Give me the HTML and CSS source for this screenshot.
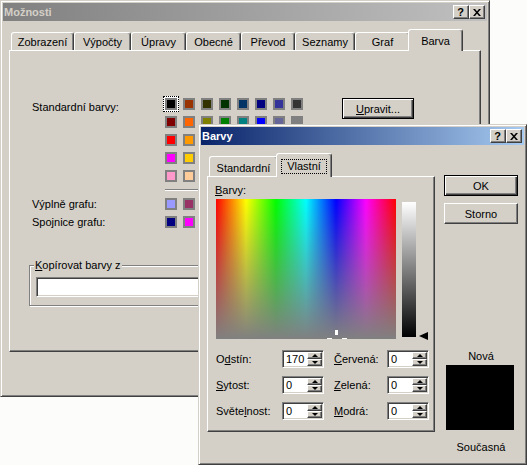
FILE: index.html
```html
<!DOCTYPE html>
<html lang="cs">
<head>
<meta charset="utf-8">
<title>Možnosti</title>
<link rel="stylesheet" href="styles.css">
</head>
<body>
<div class="desktop">
  <div class="win main-win">
    <div class="titlebar inactive">
      <span class="title-text">Možnosti</span>
      <span class="cap-btns">
        <span class="cap-btn help">?</span>
        <span class="cap-btn close"><svg width="8" height="7" viewBox="0 0 8 7"><polygon points="0,0 2,0 8,7 6,7"/><polygon points="6,0 8,0 2,7 0,7"/></svg></span>
      </span>
    </div>
    <div class="tabs main-tabs">
      <div class="tab t-zob">Zobrazení</div>
      <div class="tab t-vyp">Výpočty</div>
      <div class="tab t-upr">Úpravy</div>
      <div class="tab t-obe">Obecné</div>
      <div class="tab t-pre">Převod</div>
      <div class="tab t-sez">Seznamy</div>
      <div class="tab t-graf">Graf</div>
      <div class="tab sel t-bar">Barva</div>
    </div>
    <div class="panel main-panel">
      <div class="palette">
        <div class="pal-labels">
          <div class="lbl std-lbl">Standardní barvy:</div>
          <div class="lbl">Výplně grafu:</div>
          <div class="lbl">Spojnice grafu:</div>
        </div>
        <div class="pal-swatches">
          <div class="sw-grid">
            <span class="cell sel"><i class="sw" style="background:#000000"></i></span>
            <span class="cell"><i class="sw" style="background:#993300"></i></span>
            <span class="cell"><i class="sw" style="background:#333300"></i></span>
            <span class="cell"><i class="sw" style="background:#003300"></i></span>
            <span class="cell"><i class="sw" style="background:#003366"></i></span>
            <span class="cell"><i class="sw" style="background:#000080"></i></span>
            <span class="cell"><i class="sw" style="background:#333399"></i></span>
            <span class="cell"><i class="sw" style="background:#333333"></i></span>
            <span class="cell"><i class="sw" style="background:#800000"></i></span>
            <span class="cell"><i class="sw" style="background:#ff6600"></i></span>
            <span class="cell"><i class="sw" style="background:#808000"></i></span>
            <span class="cell"><i class="sw" style="background:#008000"></i></span>
            <span class="cell"><i class="sw" style="background:#008080"></i></span>
            <span class="cell"><i class="sw" style="background:#0000ff"></i></span>
            <span class="cell"><i class="sw" style="background:#666699"></i></span>
            <span class="cell"><i class="sw" style="background:#808080"></i></span>
            <span class="cell"><i class="sw" style="background:#ff0000"></i></span>
            <span class="cell"><i class="sw" style="background:#ff9900"></i></span>
            <span class="cell"><i class="sw" style="background:#99cc00"></i></span>
            <span class="cell"><i class="sw" style="background:#339966"></i></span>
            <span class="cell"><i class="sw" style="background:#33cccc"></i></span>
            <span class="cell"><i class="sw" style="background:#3366ff"></i></span>
            <span class="cell"><i class="sw" style="background:#800080"></i></span>
            <span class="cell"><i class="sw" style="background:#969696"></i></span>
            <span class="cell"><i class="sw" style="background:#ff00ff"></i></span>
            <span class="cell"><i class="sw" style="background:#ffcc00"></i></span>
            <span class="cell"><i class="sw" style="background:#ffff00"></i></span>
            <span class="cell"><i class="sw" style="background:#00ff00"></i></span>
            <span class="cell"><i class="sw" style="background:#00ffff"></i></span>
            <span class="cell"><i class="sw" style="background:#00ccff"></i></span>
            <span class="cell"><i class="sw" style="background:#993366"></i></span>
            <span class="cell"><i class="sw" style="background:#c0c0c0"></i></span>
            <span class="cell"><i class="sw" style="background:#ff99cc"></i></span>
            <span class="cell"><i class="sw" style="background:#ffcc99"></i></span>
            <span class="cell"><i class="sw" style="background:#ffff99"></i></span>
            <span class="cell"><i class="sw" style="background:#ccffcc"></i></span>
            <span class="cell"><i class="sw" style="background:#ccffff"></i></span>
            <span class="cell"><i class="sw" style="background:#99ccff"></i></span>
            <span class="cell"><i class="sw" style="background:#cc99ff"></i></span>
            <span class="cell"><i class="sw" style="background:#ffffff"></i></span>
          </div>
          <div class="sep"></div>
          <div class="sw-grid">
            <span class="cell"><i class="sw" style="background:#9999ff"></i></span>
            <span class="cell"><i class="sw" style="background:#993366"></i></span>
            <span class="cell"><i class="sw" style="background:#ffffcc"></i></span>
            <span class="cell"><i class="sw" style="background:#ccffff"></i></span>
            <span class="cell"><i class="sw" style="background:#660066"></i></span>
            <span class="cell"><i class="sw" style="background:#ff8080"></i></span>
            <span class="cell"><i class="sw" style="background:#0066cc"></i></span>
            <span class="cell"><i class="sw" style="background:#ccccff"></i></span>
            <span class="cell"><i class="sw" style="background:#000080"></i></span>
            <span class="cell"><i class="sw" style="background:#ff00ff"></i></span>
            <span class="cell"><i class="sw" style="background:#ffff00"></i></span>
            <span class="cell"><i class="sw" style="background:#00ffff"></i></span>
            <span class="cell"><i class="sw" style="background:#800080"></i></span>
            <span class="cell"><i class="sw" style="background:#800000"></i></span>
            <span class="cell"><i class="sw" style="background:#008080"></i></span>
            <span class="cell"><i class="sw" style="background:#0000ff"></i></span>
          </div>
        </div>
        <div class="btn def upravit"><span><u>U</u>pravit...</span></div>
      </div>
      <div class="group">
        <div class="group-title"><u>K</u>opírovat barvy z</div>
        <div class="combo"></div>
      </div>
    </div>
  </div>

  <div class="win barvy-win">
    <div class="titlebar active">
      <span class="title-text">Barvy</span>
      <span class="cap-btns">
        <span class="cap-btn help">?</span>
        <span class="cap-btn close"><svg width="8" height="7" viewBox="0 0 8 7"><polygon points="0,0 2,0 8,7 6,7"/><polygon points="6,0 8,0 2,7 0,7"/></svg></span>
      </span>
    </div>
    <div class="bv-content">
      <div class="bv-left">
        <div class="tabs bv-tabs">
          <div class="tab t-std">Standardní</div>
          <div class="tab sel t-vl"><span class="focus">Vlastní</span></div>
        </div>
        <div class="panel bv-panel">
          <div class="barvy-lbl"><u>B</u>arvy:</div>
          <div class="picker">
            <div class="spectrum">
              <span class="cross cv"></span>
              <span class="cross cl"></span>
              <span class="cross cr"></span>
            </div>
            <div class="lum"></div>
            <svg class="lum-arrow" width="9" height="8" viewBox="0 0 9 8"><polygon points="0,4 9,0 9,8"/></svg>
          </div>
          <div class="fields">
            <div class="frow">
              <span class="flbl l1">O<u>d</u>stín:</span>
              <span class="spin"><span class="val">170</span><span class="spin-btns"><span class="sb up"></span><span class="sb dn"></span></span></span>
              <span class="flbl l2"><u>Č</u>ervená:</span>
              <span class="spin"><span class="val">0</span><span class="spin-btns"><span class="sb up"></span><span class="sb dn"></span></span></span>
            </div>
            <div class="frow">
              <span class="flbl l1"><u>S</u>ytost:</span>
              <span class="spin"><span class="val">0</span><span class="spin-btns"><span class="sb up"></span><span class="sb dn"></span></span></span>
              <span class="flbl l2"><u>Z</u>elená:</span>
              <span class="spin"><span class="val">0</span><span class="spin-btns"><span class="sb up"></span><span class="sb dn"></span></span></span>
            </div>
            <div class="frow">
              <span class="flbl l1">Světe<u>l</u>nost:</span>
              <span class="spin"><span class="val">0</span><span class="spin-btns"><span class="sb up"></span><span class="sb dn"></span></span></span>
              <span class="flbl l2"><u>M</u>odrá:</span>
              <span class="spin"><span class="val">0</span><span class="spin-btns"><span class="sb up"></span><span class="sb dn"></span></span></span>
            </div>
          </div>
        </div>
      </div>
      <div class="bv-right">
        <div class="btn def ok"><span>OK</span></div>
        <div class="btn storno"><span>Storno</span></div>
        <div class="nova">Nová</div>
        <div class="big-swatch"></div>
        <div class="soucasna">Současná</div>
      </div>
    </div>
  </div>
</div>
</body>
</html>
```

FILE: styles.css
```css
* { box-sizing: border-box; }
html, body { margin: 0; padding: 0; }
body {
  background: #fcfdfb;
  font-family: "Liberation Sans", Arial, sans-serif;
  font-size: 11px;
  color: #000;
  width: 527px;
  height: 465px;
  overflow: hidden;
}
u { text-decoration: underline; text-underline-offset: 1px; }
.desktop { position: relative; width: 527px; height: 465px; }

/* windows */
.win {
  background: #d4d0c8;
  border: 1px solid;
  border-color: #d4d0c8 #404040 #404040 #d4d0c8;
  box-shadow: inset 1px 1px #fff, inset -1px -1px #808080;
  padding: 2px;
}
.main-win { width: 490px; height: 397px; }
.barvy-win { position: absolute; left: 198px; top: 124px; width: 329px; height: 341px; }

.titlebar {
  height: 18px;
  display: flex;
  align-items: center;
  justify-content: space-between;
  padding: 0 2px 0 1px;
  font-weight: bold;
}
.inactive { background: linear-gradient(to right, #808080, #c0c0c0); color: #d4d0c8; }
.active { background: linear-gradient(to right, #0a246a, #a6caf0); color: #fff; }
.cap-btns { display: flex; }
.cap-btn {
  width: 16px;
  height: 14px;
  background: #d4d0c8;
  border: 1px solid;
  border-color: #fff #404040 #404040 #fff;
  box-shadow: inset -1px -1px #808080;
  display: flex;
  align-items: center;
  justify-content: center;
  color: #000;
  font-size: 11px;
  font-weight: bold;
  line-height: 1;
}
.cap-btn.help { padding-right: 1px; }
.cap-btn svg { display: block; fill: #000; }

/* tabs */
.tabs {
  display: flex;
  align-items: flex-end;
  margin: 8px 0 0 6px;
  padding-left: 2px;
  position: relative;
  z-index: 1;
}
.main-tabs { height: 21px; }
.tab {
  height: 18px;
  border: 1px solid;
  border-bottom: none;
  border-color: #fff #404040 #fff #fff;
  box-shadow: inset -1px 0 #808080;
  border-radius: 3px 3px 0 0;
  display: flex;
  justify-content: center;
  align-items: center;
  padding-top: 1px;
  background: #d4d0c8;
  white-space: nowrap;
}
.tab.sel { height: 22px; margin: 0 -2px -1px; padding-top: 0; }
.t-zob { width: 63px; }
.t-vyp { width: 57px; }
.t-upr { width: 55px; }
.t-obe { width: 55px; }
.t-pre { width: 54px; }
.t-sez { width: 60px; }
.t-graf { width: 55px; }
.t-bar { width: 55px; }

/* panels */
.panel {
  border: 1px solid;
  border-color: #fff #404040 #404040 #fff;
  box-shadow: inset -1px -1px #808080;
  margin-left: 6px;
}
.main-panel { width: 472px; height: 302px; padding: 44px 0 0 22px; }

.palette { display: flex; align-items: flex-start; }
.pal-labels { width: 130px; }
.lbl { height: 18px; line-height: 18px; white-space: nowrap; }
.std-lbl { height: 100px; padding-top: 3px; }
.pal-swatches { width: 144px; }
.sw-grid { display: grid; grid-template-columns: repeat(8, 18px); grid-auto-rows: 18px; }
.cell { display: flex; align-items: center; justify-content: center; position: relative; }
.sw { display: block; width: 12px; height: 12px; border: 2px solid #808080; position: relative; }
.cell.sel::before {
  content: "";
  position: absolute;
  inset: 1px;
  border: 1px dotted #000;
  background: #fff;
}
.sep { height: 2px; margin: 4px 3px; border-top: 1px solid #808080; border-bottom: 1px solid #fff; }

.btn {
  background: #d4d0c8;
  border: 1px solid;
  border-color: #fff #404040 #404040 #fff;
  box-shadow: inset -1px -1px #808080;
  display: flex;
  align-items: center;
  justify-content: center;
  white-space: nowrap;
}
.btn.def {
  border-color: #000;
  box-shadow: inset 1px 1px #fff, inset -1px -1px #404040, inset -2px -2px #808080;
}
.upravit { margin: 3px 0 0 36px; width: 72px; height: 21px; }

.group {
  margin: 34px 0 0 -3px;
  width: 437px;
  padding: 0 0 8px 0;
  border: 1px solid #808080;
  box-shadow: inset 1px 1px #fff, 1px 1px #fff;
}
.group-title {
  width: fit-content;
  margin: -7px 0 0 4px;
  padding: 0 1px;
  height: 13px;
  line-height: 13px;
  background: #d4d0c8;
}
.combo {
  width: 200px;
  height: 20px;
  margin: 5px 0 0 6px;
  background: #fff;
  border: 1px solid;
  border-color: #808080 #fff #fff #808080;
  box-shadow: inset 1px 1px #404040, inset -1px -1px #d4d0c8;
}

/* Barvy dialog */
.bv-content { display: flex; margin-top: 8px; }
.bv-left { margin-left: 6px; width: 228px; }
.bv-tabs { margin: 0; height: 23px; }
.bv-tabs .tab { height: 20px; padding-top: 2px; }
.bv-tabs .tab.sel { height: 24px; padding-top: 1px; }
.t-std { width: 69px; }
.t-vl { width: 56px; }
.focus {
  display: flex;
  align-items: center;
  justify-content: center;
  width: 46px;
  height: 15px;
  border: 1px dotted #000;
}
.bv-panel { margin-left: 0; width: 228px; height: 256px; padding: 6px 0 0 7px; }
.barvy-lbl { height: 14px; line-height: 14px; }
.picker { display: flex; align-items: flex-start; margin-top: 2px; }
.spectrum {
  position: relative;
  overflow: hidden;
  margin-left: 1px;
  width: 180px;
  height: 140px;
  background:
    linear-gradient(to bottom, rgba(128,128,128,0), rgb(128,128,128)),
    linear-gradient(to right, #ff0000, #ffff00 16.67%, #00ff00 33.33%, #00ffff 50%, #0000ff 66.67%, #ff00ff 83.33%, #ff0000);
}
.cross { position: absolute; background: #fff; }
.cv { left: 119px; top: 131px; width: 3px; height: 5px; }
.cl { left: 111px; top: 139px; width: 5px; height: 2px; }
.cr { left: 126px; top: 139px; width: 5px; height: 2px; }
.lum {
  margin: 3px 0 0 6px;
  width: 14px;
  height: 135px;
  background: linear-gradient(to bottom, #ffffff, #000000);
}
.lum-arrow { display: block; margin: 133px 0 0 3px; fill: #000; }

.fields { display: flex; flex-direction: column; gap: 8px; margin-top: 10px; }
.frow { display: flex; align-items: center; height: 18px; }
.flbl { white-space: nowrap; }
.l1 { width: 66px; margin-left: 1px; }
.l2 { width: 53px; margin-left: 10px; }
.spin {
  width: 42px;
  height: 18px;
  background: #fff;
  border: 1px solid;
  border-color: #808080 #fff #fff #808080;
  box-shadow: inset 1px 1px #404040, inset -1px -1px #d4d0c8;
  padding: 1px;
  display: flex;
}
.val { flex: 1; padding-left: 2px; line-height: 14px; }
.spin-btns { width: 15px; display: flex; flex-direction: column; }
.sb {
  height: 7px;
  background: #d4d0c8;
  border: 1px solid;
  border-color: #fff #404040 #404040 #fff;
  box-shadow: inset -1px -1px #808080;
  display: flex;
  align-items: center;
  justify-content: center;
}
.sb::after { content: ""; width: 0; height: 0; border-left: 3px solid transparent; border-right: 3px solid transparent; }
.up::after { border-bottom: 3px solid #000; }
.dn::after { border-top: 3px solid #000; }

.bv-right {
  margin-left: 9px;
  width: 74px;
  padding-top: 22px;
  display: flex;
  flex-direction: column;
  align-items: center;
}
.ok { width: 74px; height: 21px; }
.storno { width: 74px; height: 21px; margin-top: 7px; }
.nova { margin-top: 125px; height: 14px; line-height: 14px; }
.big-swatch { align-self: flex-start; margin: 2px 0 0 2px; width: 68px; height: 65px; background: #000; }
.soucasna { margin-top: 10px; height: 14px; line-height: 14px; }
```
